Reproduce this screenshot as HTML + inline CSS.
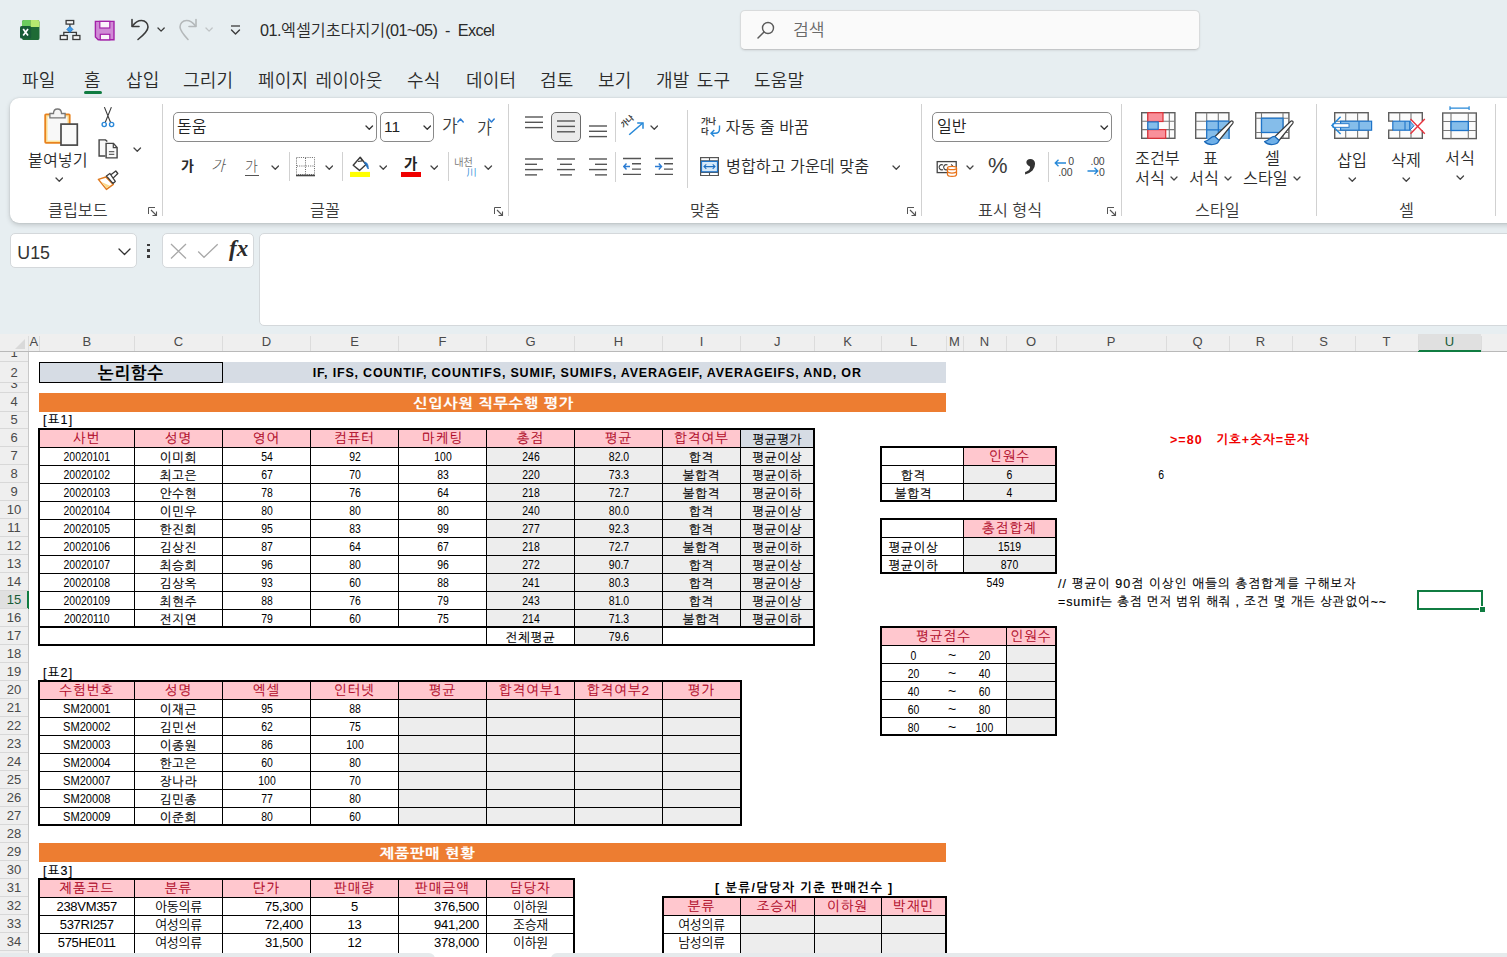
<!DOCTYPE html>
<html lang="ko"><head><meta charset="utf-8"><title>Excel</title>
<style>
html,body{margin:0;padding:0}
body{width:1507px;height:957px;overflow:hidden;background:#e7eef1;position:relative;font-family:"Liberation Sans","Noto Sans CJK KR",sans-serif;font-weight:350}
.a{position:absolute}
.t{position:absolute;white-space:nowrap;line-height:24px;height:24px}
.box{background:#fff;border:1px solid #8a8a8a;border-radius:5px;box-sizing:border-box}
.c{position:absolute;white-space:nowrap;font-size:12.5px;letter-spacing:0.7px;color:#000;font-family:"Liberation Sans","NanumGothic","Noto Sans CJK KR",sans-serif;overflow:visible}
.c{margin-top:0.5px;-webkit-text-stroke:0.15px currentColor}
.c.h{color:#b00a28;font-size:13.5px;letter-spacing:1px;margin-top:-0.5px;-webkit-text-stroke:0.1px currentColor}
.c.n{letter-spacing:0;font-size:12px;transform:scaleX(.87);margin-top:0;-webkit-text-stroke:0}
.c.m{font-family:"Liberation Sans","Noto Sans CJK KR",sans-serif;font-size:13px;letter-spacing:-0.3px;margin-top:0;-webkit-text-stroke:0}
.hd{position:absolute;text-align:center;font-size:13px;white-space:nowrap}
</style></head><body>
<svg class="a" style="left:19.5px;top:19.9px" width="20" height="20.2" viewBox="0 0 20 20.2">
<rect x="2" y="0" width="17.500" height="20.100" rx="2.200" fill="#1e6b35"/>
<path d="M2 7V2.200Q2 0 4.200 0H10.500V7Z" fill="#6ccb5f"/><path d="M10.500 0H17.300Q19.500 0 19.500 2.200V7H10.500Z" fill="#b5e86f"/>
<rect x="0" y="6" width="11.200" height="12.500" rx="1.600" fill="#185c37"/>
<path d="M3.200 9L8 15.500M8 9L3.200 15.500" stroke="#fff" stroke-width="1.700"/></svg>
<svg class="a" style="left:59px;top:19px" width="22" height="22" viewBox="0 0 22 22">
<rect x="7.100" y="1.500" width="7.600" height="3.600" fill="#f6f6f6" stroke="#3b3b3b" stroke-width="1.3"/>
<rect x="1.300" y="16.500" width="7" height="4" fill="#f6f6f6" stroke="#3b3b3b" stroke-width="1.3"/>
<rect x="13.900" y="16.500" width="7" height="4" fill="#f6f6f6" stroke="#3b3b3b" stroke-width="1.3"/>
<path d="M10.900 5.100V8M4.800 16.500V13.300H17.400V16.500M10.900 13V13.300" fill="none" stroke="#3b3b3b" stroke-width="1.3"/>
<path d="M10.900 7.400L13.900 10.400L10.900 13.400L7.900 10.400Z" fill="#3d9ae8" stroke="#1b6ec2" stroke-width="0.9"/></svg>
<svg class="a" style="left:94.4px;top:19.6px" width="22" height="22" viewBox="0 0 22 22">
<path d="M1.400 1.400H20V19.800H4.200L1.400 17Z" fill="#d08ad6" stroke="#a322a8" stroke-width="1.4"/>
<rect x="5.800" y="1.400" width="10" height="6.600" fill="#fbf3fb" stroke="#a322a8" stroke-width="1.2"/>
<rect x="6.300" y="14.300" width="9.500" height="5.500" fill="#fbf3fb" stroke="#a322a8" stroke-width="1.2"/></svg>
<svg class="a" style="left:129px;top:17px" width="22" height="24" viewBox="0 0 22 24"><path d="M3 2.5V9.5H10" fill="none" stroke="#3b3b3b" stroke-width="1.6" stroke-linecap="round" stroke-linejoin="round"/>
<path d="M3.5 9C6 5.5 9 3.5 12.5 3.5C16.5 3.5 19 6.5 19 10C19 13.5 16.5 16.5 9 22.5" fill="none" stroke="#3b3b3b" stroke-width="1.6" stroke-linecap="round"/></svg>
<svg class="a" style="left:156.9px;top:27.45px" width="8.2" height="5.1" viewBox="-1 -1 8.2 5.1"><path d="M0 0L3.1 3.1L6.2 0" fill="none" stroke="#3b3b3b" stroke-width="1.3" stroke-linecap="round" stroke-linejoin="round"/></svg>
<svg class="a" style="left:177px;top:17px" width="22" height="24" viewBox="0 0 22 24"><path d="M19 2.5V9.5H12" fill="none" stroke="#b4b8ba" stroke-width="1.6" stroke-linecap="round" stroke-linejoin="round"/>
<path d="M18.500 9C16 5.5 13 3.500 9.500 3.500C5.500 3.500 3 6.500 3 10C3 13.500 5.500 16.500 11 22.500" fill="none" stroke="#b4b8ba" stroke-width="1.6" stroke-linecap="round"/></svg>
<svg class="a" style="left:204.9px;top:27.45px" width="8.2" height="5.1" viewBox="-1 -1 8.2 5.1"><path d="M0 0L3.1 3.1L6.2 0" fill="none" stroke="#c0c4c6" stroke-width="1.3" stroke-linecap="round" stroke-linejoin="round"/></svg>
<svg class="a" style="left:230px;top:24px" width="11" height="12" viewBox="0 0 11 12"><path d="M1 2H10" stroke="#3b3b3b" stroke-width="1.3"/><path d="M1.5 6L5.5 10L9.5 6" fill="none" stroke="#3b3b3b" stroke-width="1.4" stroke-linejoin="round" stroke-linecap="round"/></svg>
<div class="t " style="left:260px;top:18px;font-size:16.2px;color:#2b2b2b;"><span style="letter-spacing:-0.5px">01.</span>엑셀기초다지기<span style="letter-spacing:-0.6px">(01~05)&nbsp; -&nbsp; Excel</span></div>
<div class="a" style="left:739.500px;top:9.800px;width:458px;height:38px;background:#fafafa;border:1px solid #d9dbdc;border-bottom-color:#c4c6c8;border-radius:5px;box-shadow:0 1px 2px rgba(0,0,0,.08)"></div>
<svg class="a" style="left:756px;top:20px" width="20" height="20" viewBox="0 0 20 20"><circle cx="12" cy="8" r="5.5" fill="none" stroke="#5a5a5a" stroke-width="1.4"/><path d="M8 12L2 18" stroke="#5a5a5a" stroke-width="1.5" stroke-linecap="round"/></svg>
<div class="t " style="left:793px;top:18px;font-size:17.2px;color:#6a6a6a;">검색</div>
<div class="t " style="left:22px;top:68.5px;font-size:18px;color:#2b2b2b;letter-spacing:0.2px;word-spacing:2px">파일</div>
<div class="t " style="left:84px;top:68.5px;font-size:18px;color:#2b2b2b;letter-spacing:0.2px;word-spacing:2px">홈</div>
<div class="t " style="left:126px;top:68.5px;font-size:18px;color:#2b2b2b;letter-spacing:0.2px;word-spacing:2px">삽입</div>
<div class="t " style="left:183px;top:68.5px;font-size:18px;color:#2b2b2b;letter-spacing:0.2px;word-spacing:2px">그리기</div>
<div class="t " style="left:258px;top:68.5px;font-size:18px;color:#2b2b2b;letter-spacing:0.2px;word-spacing:2px">페이지 레이아웃</div>
<div class="t " style="left:407px;top:68.5px;font-size:18px;color:#2b2b2b;letter-spacing:0.2px;word-spacing:2px">수식</div>
<div class="t " style="left:466px;top:68.5px;font-size:18px;color:#2b2b2b;letter-spacing:0.2px;word-spacing:2px">데이터</div>
<div class="t " style="left:540px;top:68.5px;font-size:18px;color:#2b2b2b;letter-spacing:0.2px;word-spacing:2px">검토</div>
<div class="t " style="left:598px;top:68.5px;font-size:18px;color:#2b2b2b;letter-spacing:0.2px;word-spacing:2px">보기</div>
<div class="t " style="left:656px;top:68.5px;font-size:18px;color:#2b2b2b;letter-spacing:0.2px;word-spacing:2px">개발 도구</div>
<div class="t " style="left:754px;top:68.5px;font-size:18px;color:#2b2b2b;letter-spacing:0.2px;word-spacing:2px">도움말</div>
<div class="a" style="left:84px;top:91px;width:18px;height:3px;border-radius:1.5px;background:#107c41"></div>
<div class="a" style="left:10px;top:97.5px;width:1520px;height:125px;background:#fff;border-radius:9px;box-shadow:0 2px 5px rgba(0,0,0,.17),0 0 2px rgba(0,0,0,.12)"></div>
<div class="a" style="left:162px;top:104px;width:1px;height:112px;background:#d1d1d1"></div>
<div class="a" style="left:508px;top:104px;width:1px;height:112px;background:#d1d1d1"></div>
<div class="a" style="left:921px;top:104px;width:1px;height:112px;background:#d1d1d1"></div>
<div class="a" style="left:1121px;top:104px;width:1px;height:112px;background:#d1d1d1"></div>
<div class="a" style="left:1316px;top:104px;width:1px;height:112px;background:#d1d1d1"></div>
<div class="a" style="left:1495px;top:104px;width:1px;height:112px;background:#d1d1d1"></div>
<div class="a" style="left:686.5px;top:110px;width:1px;height:78px;background:#d1d1d1"></div>
<div class="t " style="left:48px;top:197.5px;font-size:16.2px;color:#3b3b3b;">클립보드</div>
<svg class="a" style="left:148px;top:207px" width="10" height="10" viewBox="0 0 10 10"><path d="M0.5 7V0.5H7" fill="none" stroke="#555" stroke-width="1"/><path d="M3 3L8.5 8.5M8.5 4.5V8.5H4.5" fill="none" stroke="#555" stroke-width="1.1"/></svg>
<div class="t " style="left:310px;top:197.5px;font-size:16.2px;color:#3b3b3b;">글꼴</div>
<svg class="a" style="left:493.5px;top:207px" width="10" height="10" viewBox="0 0 10 10"><path d="M0.5 7V0.5H7" fill="none" stroke="#555" stroke-width="1"/><path d="M3 3L8.5 8.5M8.5 4.5V8.5H4.5" fill="none" stroke="#555" stroke-width="1.1"/></svg>
<div class="t " style="left:690px;top:197.5px;font-size:16.2px;color:#3b3b3b;">맞춤</div>
<svg class="a" style="left:906.5px;top:207px" width="10" height="10" viewBox="0 0 10 10"><path d="M0.5 7V0.5H7" fill="none" stroke="#555" stroke-width="1"/><path d="M3 3L8.5 8.5M8.5 4.5V8.5H4.5" fill="none" stroke="#555" stroke-width="1.1"/></svg>
<div class="t " style="left:978px;top:197.5px;font-size:16.2px;color:#3b3b3b;">표시 형식</div>
<svg class="a" style="left:1106.5px;top:207px" width="10" height="10" viewBox="0 0 10 10"><path d="M0.5 7V0.5H7" fill="none" stroke="#555" stroke-width="1"/><path d="M3 3L8.5 8.5M8.5 4.5V8.5H4.5" fill="none" stroke="#555" stroke-width="1.1"/></svg>
<div class="t " style="left:1195px;top:197.5px;font-size:16.2px;color:#3b3b3b;">스타일</div>
<div class="t " style="left:1399px;top:197.5px;font-size:16.2px;color:#3b3b3b;">셀</div>
<svg class="a" style="left:41px;top:106px" width="38" height="46" viewBox="0 0 38 46">
<rect x="4.200" y="8.300" width="24.500" height="28.500" rx="0.800" fill="#fde29a" stroke="#e8821e" stroke-width="1.8"/>
<rect x="6.600" y="10.600" width="19.800" height="24" fill="#f8f8f8"/>
<path d="M8.900 11.800V7.500H12.500C12.500 1.500 20.500 1.500 20.500 7.500H24.100V11.800Z" fill="#f5f5f5" stroke="#777" stroke-width="1.3"/>
<rect x="20" y="18.100" width="16.300" height="21" fill="#fafafa" stroke="#4a4a4a" stroke-width="1.7"/></svg>
<div class="t " style="left:28px;top:147.5px;font-size:16.2px;color:#2b2b2b;">붙여넣기</div>
<svg class="a" style="left:54.75px;top:176.875px" width="8.5" height="5.25" viewBox="-1 -1 8.5 5.25"><path d="M0 0L3.25 3.25L6.5 0" fill="none" stroke="#444" stroke-width="1.25" stroke-linecap="round" stroke-linejoin="round"/></svg>
<svg class="a" style="left:99px;top:106px" width="16" height="22" viewBox="0 0 16 22"><path d="M5.400 1.100L11.600 16.500M12.400 1.100L6.200 16.500" stroke="#3b3b3b" stroke-width="1.1" fill="none"/>
<circle cx="5.200" cy="18.500" r="2.100" fill="none" stroke="#2b88d8" stroke-width="1.4"/><circle cx="12.600" cy="18.500" r="2.100" fill="none" stroke="#2b88d8" stroke-width="1.4"/></svg>
<svg class="a" style="left:97px;top:138px" width="22" height="22" viewBox="0 0 22 22"><path d="M8.400 18H2.100V1.900H8.500L10.300 3.600" fill="#fafafa" stroke="#444" stroke-width="1.4"/>
<path d="M9.100 5.400H16.500L20.100 9.500V19.900H9.100Z" fill="#fafafa" stroke="#444" stroke-width="1.4"/><path d="M16.300 5.400V9.700H20.100" fill="none" stroke="#444" stroke-width="1.2"/><path d="M11.900 13.600H17.300M11.900 16.400H17.300" stroke="#666" stroke-width="1.1"/></svg>
<svg class="a" style="left:133.25px;top:147.075px" width="8.5" height="5.25" viewBox="-1 -1 8.5 5.25"><path d="M0 0L3.25 3.25L6.5 0" fill="none" stroke="#444" stroke-width="1.25" stroke-linecap="round" stroke-linejoin="round"/></svg>
<svg class="a" style="left:97px;top:170px" width="22" height="22" viewBox="0 0 22 22"><path d="M1.400 9.400L9.400 19.400L16.300 14.400L8.900 7Z" fill="#fff" stroke="#e07a1f" stroke-width="1.5" stroke-linejoin="round"/>
<path d="M4.500 12L9.600 18.200L13 15.800Z" fill="#fbd98a"/>
<path d="M12.900 5.500L18.800 1L20.800 3.500L15.800 8.400" fill="#fff" stroke="#3b3b3b" stroke-width="1.3" stroke-linejoin="round"/>
<path d="M9.400 6L12.900 3.500L18.300 11.400L15.900 13.400Z" fill="#fff" stroke="#3b3b3b" stroke-width="1.3" stroke-linejoin="round"/></svg>
<div class="a box" style="left:173px;top:112px;width:204px;height:29.5px"></div>
<div class="t " style="left:177px;top:114.5px;font-size:16px;color:#222;">돋움</div>
<svg class="a" style="left:365.25px;top:124.875px" width="8.5" height="5.25" viewBox="-1 -1 8.5 5.25"><path d="M0 0L3.25 3.25L6.5 0" fill="none" stroke="#333" stroke-width="1.3" stroke-linecap="round" stroke-linejoin="round"/></svg>
<div class="a box" style="left:380px;top:112px;width:54px;height:29.5px"></div>
<div class="t " style="left:384px;top:115px;font-size:15.5px;color:#222;">11</div>
<svg class="a" style="left:422.75px;top:124.875px" width="8.5" height="5.25" viewBox="-1 -1 8.5 5.25"><path d="M0 0L3.25 3.25L6.5 0" fill="none" stroke="#333" stroke-width="1.3" stroke-linecap="round" stroke-linejoin="round"/></svg>
<div class="t " style="left:442px;top:114.5px;font-size:17px;color:#3b3b3b;">가</div>
<svg class="a" style="left:457px;top:118px" width="7" height="5" viewBox="0 0 7 5"><path d="M0.8 4L3.500 1L6.200 4" fill="none" stroke="#2b7cd3" stroke-width="1.5" stroke-linecap="round" stroke-linejoin="round"/></svg>
<div class="t " style="left:477px;top:115.5px;font-size:16.2px;color:#3b3b3b;">가</div>
<svg class="a" style="left:488px;top:118px" width="7" height="5" viewBox="0 0 7 5"><path d="M0.8 1L3.500 4L6.200 1" fill="none" stroke="#2b7cd3" stroke-width="1.5" stroke-linecap="round" stroke-linejoin="round"/></svg>
<div class="t " style="left:181px;top:154px;font-size:14px;color:#2b2b2b;font-weight:700">가</div>
<div class="t " style="left:211px;top:154px;font-size:15px;color:#555;font-style:italic;font-weight:300">가</div>
<div class="t " style="left:245px;top:154px;font-size:14px;color:#555;font-weight:300">가</div>
<div class="a" style="left:245px;top:174.5px;width:14px;height:1px;background:#555"></div>
<svg class="a" style="left:270.75px;top:164.875px" width="8.5" height="5.25" viewBox="-1 -1 8.5 5.25"><path d="M0 0L3.25 3.25L6.5 0" fill="none" stroke="#444" stroke-width="1.25" stroke-linecap="round" stroke-linejoin="round"/></svg>
<div class="a" style="left:288.5px;top:152px;width:1px;height:29px;background:#d1d1d1"></div>
<svg class="a" style="left:296px;top:156.7px" width="20" height="20" viewBox="0 0 20 20"><rect x="0.5" y="0.5" width="18" height="17" fill="none" stroke="#666" stroke-width="1" stroke-dasharray="1 1.2"/>
<path d="M9.500 1V18M1 9H18" stroke="#666" stroke-width="1" stroke-dasharray="1 1.2"/><path d="M0 18.500H19" stroke="#444" stroke-width="1.6"/></svg>
<svg class="a" style="left:324.75px;top:164.875px" width="8.5" height="5.25" viewBox="-1 -1 8.5 5.25"><path d="M0 0L3.25 3.25L6.5 0" fill="none" stroke="#444" stroke-width="1.25" stroke-linecap="round" stroke-linejoin="round"/></svg>
<div class="a" style="left:341.5px;top:152px;width:1px;height:29px;background:#d1d1d1"></div>
<svg class="a" style="left:350px;top:154px" width="22" height="24" viewBox="0 0 22 24"><path d="M3.200 11.300L10.200 3.300L16 10.600L9.500 16.400Z" fill="#fff" stroke="#3b3b3b" stroke-width="1.4" stroke-linejoin="round"/><path d="M10.200 3.300L12.300 6.800L8 7.500" fill="none" stroke="#3b3b3b" stroke-width="1.2" stroke-linejoin="round"/>
<path d="M14.200 8.200C17 8 18.300 10.500 18.300 15C16.800 13.500 16.500 11.500 14.200 8.200Z" fill="#1e6fc0" stroke="#1e6fc0" stroke-width="0.8" stroke-linejoin="round"/>
<rect x="0" y="17.900" width="20" height="5.100" fill="#ffff00"/></svg>
<svg class="a" style="left:378.75px;top:164.875px" width="8.5" height="5.25" viewBox="-1 -1 8.5 5.25"><path d="M0 0L3.25 3.25L6.5 0" fill="none" stroke="#444" stroke-width="1.25" stroke-linecap="round" stroke-linejoin="round"/></svg>
<div class="t " style="left:404px;top:151.7px;font-size:14.5px;color:#222;font-weight:700">가</div>
<div class="a" style="left:401px;top:171.900px;width:20px;height:5.100px;background:#f00000"></div>
<svg class="a" style="left:429.75px;top:164.875px" width="8.5" height="5.25" viewBox="-1 -1 8.5 5.25"><path d="M0 0L3.25 3.25L6.5 0" fill="none" stroke="#444" stroke-width="1.25" stroke-linecap="round" stroke-linejoin="round"/></svg>
<div class="a" style="left:447.5px;top:152px;width:1px;height:29px;background:#d1d1d1"></div>
<div class="t " style="left:454px;top:149.5px;font-size:10.5px;color:#777;letter-spacing:-0.5px">내천</div>
<div class="t " style="left:466.5px;top:161px;font-size:10px;color:#2b88d8;">川</div>
<svg class="a" style="left:484.25px;top:164.875px" width="8.5" height="5.25" viewBox="-1 -1 8.5 5.25"><path d="M0 0L3.25 3.25L6.5 0" fill="none" stroke="#444" stroke-width="1.25" stroke-linecap="round" stroke-linejoin="round"/></svg>
<svg class="a" style="left:525px;top:116.3px" width="18" height="17.9" viewBox="0 0 18 17.9"><path d="M0 1.0H18" stroke="#555" stroke-width="1.4"/><path d="M0 6.3H18" stroke="#555" stroke-width="1.4"/><path d="M0 11.6H18" stroke="#555" stroke-width="1.4"/></svg>
<div class="a" style="left:551px;top:112px;width:27.5px;height:28px;background:#ebebeb;border:1px solid #6a6a6a;border-radius:5px"></div>
<svg class="a" style="left:557px;top:120px" width="18" height="18.200000000000003" viewBox="0 0 18 18.200000000000003"><path d="M0 1.0H18" stroke="#555" stroke-width="1.4"/><path d="M0 6.4H18" stroke="#555" stroke-width="1.4"/><path d="M0 11.8H18" stroke="#555" stroke-width="1.4"/></svg>
<svg class="a" style="left:589px;top:124.8px" width="18" height="17.9" viewBox="0 0 18 17.9"><path d="M0 1.0H18" stroke="#555" stroke-width="1.4"/><path d="M0 6.3H18" stroke="#555" stroke-width="1.4"/><path d="M0 11.6H18" stroke="#555" stroke-width="1.4"/></svg>
<div class="a" style="left:614.5px;top:112px;width:1px;height:30px;background:#d1d1d1"></div>
<svg class="a" style="left:621px;top:115px" width="24" height="24" viewBox="0 0 24 24"><path d="M8.200 19.700L21.500 8.300" stroke="#2688d8" stroke-width="1.5"/><path d="M16.200 7.900H22V13.700" fill="none" stroke="#2688d8" stroke-width="1.5"/>
<text x="0" y="0" font-size="8" font-weight="700" fill="#444" transform="translate(2.500 13.500) rotate(-42)" font-family="Noto Sans CJK KR,sans-serif">가나</text></svg>
<svg class="a" style="left:649.75px;top:124.875px" width="8.5" height="5.25" viewBox="-1 -1 8.5 5.25"><path d="M0 0L3.25 3.25L6.5 0" fill="none" stroke="#444" stroke-width="1.25" stroke-linecap="round" stroke-linejoin="round"/></svg>
<svg class="a" style="left:525px;top:158px" width="18" height="23.2" viewBox="0 0 18 23.2"><path d="M0 1.0H18" stroke="#555" stroke-width="1.4"/><path d="M0 6.3H12" stroke="#555" stroke-width="1.4"/><path d="M0 11.6H18" stroke="#555" stroke-width="1.4"/><path d="M0 16.9H12" stroke="#555" stroke-width="1.4"/></svg>
<svg class="a" style="left:557px;top:158px" width="18" height="23.2" viewBox="0 0 18 23.2"><path d="M0.0 1.0H18.0" stroke="#555" stroke-width="1.4"/><path d="M3.0 6.3H15.0" stroke="#555" stroke-width="1.4"/><path d="M0.0 11.6H18.0" stroke="#555" stroke-width="1.4"/><path d="M3.0 16.9H15.0" stroke="#555" stroke-width="1.4"/></svg>
<svg class="a" style="left:589px;top:158px" width="18" height="23.2" viewBox="0 0 18 23.2"><path d="M0 1.0H18" stroke="#555" stroke-width="1.4"/><path d="M6 6.3H18" stroke="#555" stroke-width="1.4"/><path d="M0 11.6H18" stroke="#555" stroke-width="1.4"/><path d="M6 16.9H18" stroke="#555" stroke-width="1.4"/></svg>
<div class="a" style="left:614.5px;top:152px;width:1px;height:30px;background:#d1d1d1"></div>
<svg class="a" style="left:623px;top:157px" width="20" height="20" viewBox="0 0 20 20"><path d="M0 1.500H18M9 6.800H18M9 12.100H18M0 17.400H18" stroke="#555" stroke-width="1.4"/><path d="M7 9.500H0.8M3.500 6.500L0.800 9.500L3.500 12.500" fill="none" stroke="#2b7cd3" stroke-width="1.4"/></svg>
<svg class="a" style="left:655px;top:157px" width="20" height="20" viewBox="0 0 20 20"><path d="M0 1.500H18M9 6.800H18M9 12.100H18M0 17.400H18" stroke="#555" stroke-width="1.4"/><path d="M0 9.500H6.500M3.800 6.500L6.500 9.500L3.800 12.500" fill="none" stroke="#2b7cd3" stroke-width="1.4"/></svg>
<div class="t " style="left:701px;top:109.4px;font-size:8.3px;color:#3b3b3b;letter-spacing:-0.3px;font-weight:700">가나</div>
<div class="t " style="left:701px;top:119.19999999999999px;font-size:8.3px;color:#3b3b3b;font-weight:700">다</div>
<svg class="a" style="left:708px;top:124px" width="16" height="14" viewBox="0 0 16 14"><path d="M11.500 1.500V5C11.500 8 10 9.300 7 9.300H3.300M6.300 6L3 9.300L6.300 12.600" fill="none" stroke="#2688d8" stroke-width="1.4"/></svg>
<div class="t " style="left:725.5px;top:114.5px;font-size:16.2px;color:#2b2b2b;">자동 줄 바꿈</div>
<svg class="a" style="left:700px;top:156.8px" width="19.5" height="19.5" viewBox="0 0 19.5 19.5"><rect x="0.600" y="0.600" width="17.800" height="18" fill="#fff" stroke="#555" stroke-width="1.2"/><path d="M0.600 3.800H18.400M0.600 15.400H18.400M9.500 0.600V3.800M9.500 15.400V18.600" stroke="#555" stroke-width="1.1"/>
<rect x="1.500" y="4.400" width="16" height="10.400" fill="#d6e9f9" stroke="#1e74c9" stroke-width="1.2"/><path d="M4 9.600H15M6.300 7.300L4 9.600L6.300 11.900M12.700 7.300L15 9.600L12.700 11.900" fill="none" stroke="#1e6fc0" stroke-width="1.1"/></svg>
<div class="t " style="left:726px;top:154px;font-size:16.2px;color:#2b2b2b;">병합하고 가운데 맞춤</div>
<svg class="a" style="left:891.75px;top:164.875px" width="8.5" height="5.25" viewBox="-1 -1 8.5 5.25"><path d="M0 0L3.25 3.25L6.5 0" fill="none" stroke="#444" stroke-width="1.25" stroke-linecap="round" stroke-linejoin="round"/></svg>
<div class="a box" style="left:932px;top:112px;width:180px;height:29.5px"></div>
<div class="t " style="left:937px;top:114.5px;font-size:16px;color:#222;">일반</div>
<svg class="a" style="left:1100.25px;top:124.875px" width="8.5" height="5.25" viewBox="-1 -1 8.5 5.25"><path d="M0 0L3.25 3.25L6.5 0" fill="none" stroke="#333" stroke-width="1.3" stroke-linecap="round" stroke-linejoin="round"/></svg>
<svg class="a" style="left:936px;top:157px" width="24" height="22" viewBox="0 0 24 22"><rect x="1.2" y="4.600" width="19" height="11" fill="#fff" stroke="#444" stroke-width="1.3"/><path d="M7 8A2.600 2.600 0 1 0 7 12.500M11.500 8A2.600 2.600 0 1 0 11.500 12.500M15 7.500A3 3 0 0 1 15 13" fill="none" stroke="#444" stroke-width="1.2"/>
<path d="M11.500 11V17.500C11.500 20 20.500 20 20.500 17.500V11" fill="#fff" stroke="#e8731a" stroke-width="1.3"/><ellipse cx="16" cy="11" rx="4.500" ry="1.700" fill="#fff" stroke="#e8731a" stroke-width="1.3"/><path d="M11.500 14.300C11.500 16.600 20.500 16.600 20.500 14.300" fill="none" stroke="#e8731a" stroke-width="1.2"/></svg>
<svg class="a" style="left:966.0px;top:165.0px" width="8" height="5.0" viewBox="-1 -1 8 5.0"><path d="M0 0L3.0 3.0L6 0" fill="none" stroke="#444" stroke-width="1.3" stroke-linecap="round" stroke-linejoin="round"/></svg>
<div class="t " style="left:988px;top:154px;font-size:22px;color:#3b3b3b;">%</div>
<div class="a" style="left:1022px;top:145.700px;font:bold 50px 'Liberation Serif',serif;line-height:normal;color:#333">’</div>
<div class="a" style="left:1047.5px;top:152px;width:1px;height:30px;background:#d1d1d1"></div>
<div class="t " style="left:1068.3px;top:149.3px;font-size:10.5px;color:#444;letter-spacing:-0.2px;font-weight:400">0</div>
<div class="t " style="left:1058.3px;top:159.5px;font-size:10.5px;color:#444;letter-spacing:-0.2px;font-weight:400">.00</div>
<svg class="a" style="left:1054px;top:158.5px" width="13" height="8" viewBox="0 0 13 8"><path d="M12 4H1.200M4.500 0.700L1.200 4L4.500 7.300" fill="none" stroke="#2688d8" stroke-width="1.3"/></svg>
<div class="t " style="left:1090.5px;top:149.3px;font-size:10.5px;color:#444;letter-spacing:-0.2px;font-weight:400">.00</div>
<div class="t " style="left:1096.3px;top:159.5px;font-size:10.5px;color:#444;letter-spacing:-0.2px;font-weight:400">.0</div>
<svg class="a" style="left:1086.5px;top:167.2px" width="12" height="8" viewBox="0 0 12 8"><path d="M0.500 4H10.800M7.500 0.700L10.800 4L7.500 7.300" fill="none" stroke="#2688d8" stroke-width="1.3"/></svg>
<svg class="a" style="left:1140.5px;top:112.3px" width="36" height="28" viewBox="0 0 36 28"><rect x="0.7" y="0.7" width="33.2" height="25.6" fill="#fbfbfb" stroke="#5e5e5e" stroke-width="1.4"/><path d="M6.8 0.7V26.3M28.3 0.7V26.3M0.7 9.2H33.9M0.7 17.6H33.9" stroke="#787878" stroke-width="1.1"/><rect x="6.8" y="0.700" width="15.200" height="8.800" fill="#f9909a" stroke="#dc2f36" stroke-width="1.2"/><rect x="6.8" y="17.600" width="17.900" height="8.700" fill="#f9909a" stroke="#dc2f36" stroke-width="1.2"/><rect x="6.8" y="9.900" width="10.400" height="7.400" fill="#85bdea" stroke="#1e74c9" stroke-width="1.2"/></svg>
<svg class="a" style="left:1194.5px;top:112.3px" width="42" height="36" viewBox="0 0 42 36"><rect x="0.7" y="0.7" width="33.2" height="25.6" fill="#fbfbfb" stroke="#5e5e5e" stroke-width="1.4"/><path d="M11.7 0.7V26.3M23.3 0.7V26.3M0.7 9.2H33.9M0.7 17.8H33.9" stroke="#787878" stroke-width="1.1"/><rect x="11.700" y="9.200" width="22.900" height="17.800" fill="#85bdea"/><path d="M11.700 27V9.200H34M23.300 9.200V27M11.700 17.800H34.600M34 9.200V27" fill="none" stroke="#1e74c9" stroke-width="1.2"/><path d="M19.5 25L35.500 9.500C37 8 39 9.700 37.800 11.300L24 28.500Z" fill="#fff" stroke="#3b3b3b" stroke-width="1.2" stroke-linejoin="round"/><path d="M19.800 24.500C15.500 24 15 28.500 9.500 29.500C13.500 34 23 33.500 24 28.200Z" fill="#6fb0e8" stroke="#1b69b8" stroke-width="1.2" stroke-linejoin="round"/></svg>
<svg class="a" style="left:1255.4px;top:112.3px" width="42" height="36" viewBox="0 0 42 36"><rect x="0.7" y="0.7" width="33.2" height="25.6" fill="#fbfbfb" stroke="#5e5e5e" stroke-width="1.4"/><path d="M6.5 0.7V26.3M28 0.7V26.3M0.7 6.2H33.9M0.7 20.5H33.9" stroke="#787878" stroke-width="1.1"/><rect x="6.500" y="6.200" width="21.500" height="14.300" fill="#85bdea" stroke="#1e74c9" stroke-width="1.3"/><path d="M19.5 25L35.500 9.500C37 8 39 9.700 37.800 11.300L24 28.500Z" fill="#fff" stroke="#3b3b3b" stroke-width="1.2" stroke-linejoin="round"/><path d="M19.800 24.500C15.500 24 15 28.500 9.500 29.500C13.500 34 23 33.500 24 28.200Z" fill="#6fb0e8" stroke="#1b69b8" stroke-width="1.2" stroke-linejoin="round"/></svg>
<div class="t " style="left:1135px;top:146px;font-size:16.2px;color:#2b2b2b;">조건부</div>
<div class="t " style="left:1135px;top:165.5px;font-size:16.2px;color:#2b2b2b;">서식</div>
<svg class="a" style="left:1170.0px;top:176.0px" width="8" height="5.0" viewBox="-1 -1 8 5.0"><path d="M0 0L3.0 3.0L6 0" fill="none" stroke="#444" stroke-width="1.3" stroke-linecap="round" stroke-linejoin="round"/></svg>
<div class="t " style="left:1203px;top:146px;font-size:16.2px;color:#2b2b2b;">표</div>
<div class="t " style="left:1189px;top:165.5px;font-size:16.2px;color:#2b2b2b;">서식</div>
<svg class="a" style="left:1224.0px;top:176.0px" width="8" height="5.0" viewBox="-1 -1 8 5.0"><path d="M0 0L3.0 3.0L6 0" fill="none" stroke="#444" stroke-width="1.3" stroke-linecap="round" stroke-linejoin="round"/></svg>
<div class="t " style="left:1265px;top:146px;font-size:16.2px;color:#2b2b2b;">셀</div>
<div class="t " style="left:1243px;top:165.5px;font-size:16.2px;color:#2b2b2b;">스타일</div>
<svg class="a" style="left:1293.0px;top:176.0px" width="8" height="5.0" viewBox="-1 -1 8 5.0"><path d="M0 0L3.0 3.0L6 0" fill="none" stroke="#444" stroke-width="1.3" stroke-linecap="round" stroke-linejoin="round"/></svg>
<svg class="a" style="left:1330.3px;top:112.3px" width="44" height="28" viewBox="0 0 44 28"><g transform="translate(4 0)"><rect x="0.7" y="0.7" width="33.5" height="25.6" fill="#fbfbfb" stroke="#5e5e5e" stroke-width="1.4"/><path d="M11.7 0.7V26.3M23.6 0.7V26.3M0.7 9.2H34.199999999999996M0.7 18.2H34.199999999999996" stroke="#787878" stroke-width="1.1"/><rect x="6.600" y="9.200" width="31" height="9" fill="#85bdea" stroke="#1e74c9" stroke-width="1.2"/><path d="M25 9.200V18.200" stroke="#1e74c9" stroke-width="1.1"/><rect x="-1" y="11.700" width="16" height="3.600" fill="#fff" stroke="#1e74c9" stroke-width="0.9"/><path d="M6.600 4.800L-2 13.500L6.600 22" fill="none" stroke="#2688d8" stroke-width="1.5"/></g></svg>
<svg class="a" style="left:1388.3px;top:112.3px" width="40" height="28" viewBox="0 0 40 28"><rect x="0.7" y="0.7" width="33.6" height="25.6" fill="#fbfbfb" stroke="#5e5e5e" stroke-width="1.4"/><path d="M11.7 0.7V26.3M23 0.7V26.3" stroke="#787878" stroke-width="1.1"/><rect x="-1" y="9.200" width="40" height="9" fill="#fff"/><rect x="4.800" y="9.200" width="17.100" height="9" fill="#85bdea" stroke="#1e74c9" stroke-width="1.2"/><path d="M21.900 9.200L26 13.700L21.900 18.200Z" fill="#85bdea" stroke="#1e74c9" stroke-width="1"/><path d="M17 9.200V18.200" stroke="#1e74c9" stroke-width="1.1"/><path d="M0 9.200H4.800M0 18.200H4.800" stroke="#5e5e5e" stroke-width="1.3"/><path d="M22.500 6.900L36.800 21.800M36.800 6.900L22.500 21.800" stroke="#e8343f" stroke-width="1.4"/></svg>
<svg class="a" style="left:1442.4px;top:105px" width="38" height="36" viewBox="0 0 38 36"><path d="M8 3.100H27.100M8 1.200V5M27.100 1.200V5" stroke="#2688d8" stroke-width="1.2"/><g transform="translate(0 7.300)"><rect x="0.7" y="0.7" width="33.6" height="25.6" fill="#fbfbfb" stroke="#5e5e5e" stroke-width="1.4"/><path d="M9 0.7V26.3M26.3 0.7V26.3M0.7 9.2H34.3M0.7 18.2H34.3" stroke="#787878" stroke-width="1.1"/><rect x="9" y="9.200" width="17.300" height="9" fill="#85bdea" stroke="#1e74c9" stroke-width="1.3"/></g></svg>
<div class="t " style="left:1337px;top:147.5px;font-size:16.2px;color:#2b2b2b;">삽입</div>
<svg class="a" style="left:1348.25px;top:177.375px" width="8.5" height="5.25" viewBox="-1 -1 8.5 5.25"><path d="M0 0L3.25 3.25L6.5 0" fill="none" stroke="#444" stroke-width="1.25" stroke-linecap="round" stroke-linejoin="round"/></svg>
<div class="t " style="left:1391px;top:147.5px;font-size:16.2px;color:#2b2b2b;">삭제</div>
<svg class="a" style="left:1402.25px;top:177.375px" width="8.5" height="5.25" viewBox="-1 -1 8.5 5.25"><path d="M0 0L3.25 3.25L6.5 0" fill="none" stroke="#444" stroke-width="1.25" stroke-linecap="round" stroke-linejoin="round"/></svg>
<div class="t " style="left:1445px;top:145.5px;font-size:16.2px;color:#2b2b2b;">서식</div>
<svg class="a" style="left:1456.25px;top:175.375px" width="8.5" height="5.25" viewBox="-1 -1 8.5 5.25"><path d="M0 0L3.25 3.25L6.5 0" fill="none" stroke="#444" stroke-width="1.25" stroke-linecap="round" stroke-linejoin="round"/></svg>
<div class="a" style="left:10.400px;top:233.400px;width:125px;height:33px;background:#fff;border:1px solid #d4d8db;border-radius:5px"></div>
<div class="t " style="left:17.3px;top:240.6px;font-size:17.8px;color:#333;font-weight:400">U15</div>
<svg class="a" style="left:117.9px;top:248.35px" width="13" height="7.5" viewBox="-1 -1 13 7.5"><path d="M0 0L5.5 5.5L11 0" fill="none" stroke="#333" stroke-width="1.3" stroke-linecap="round" stroke-linejoin="round"/></svg>
<div class="a" style="left:147.300px;top:243.5px;width:2.8px;height:2.8px;background:#3b3b3b"></div>
<div class="a" style="left:147.300px;top:249.29999999999998px;width:2.8px;height:2.8px;background:#3b3b3b"></div>
<div class="a" style="left:147.300px;top:255.1px;width:2.8px;height:2.8px;background:#3b3b3b"></div>
<div class="a" style="left:162.400px;top:233.400px;width:89.500px;height:33px;background:#fff;border:1px solid #d4d8db;border-radius:5px"></div>
<svg class="a" style="left:169.5px;top:242.5px" width="17" height="17" viewBox="0 0 17 17"><path d="M1 1L16 15.500M16 1L1 15.500" stroke="#a8a8a8" stroke-width="1.3"/></svg>
<svg class="a" style="left:197px;top:242.5px" width="22" height="16" viewBox="0 0 22 16"><path d="M1.200 8.500L7 14.300L20.700 1.300" fill="none" stroke="#a8a8a8" stroke-width="1.3"/></svg>
<div class="t " style="left:229px;top:236.7px;font-size:23px;color:#2b2b2b;font-family:Liberation Serif,serif;font-style:italic;font-weight:700;letter-spacing:0px;line-height:24px">fx</div>
<div class="a" style="left:259.400px;top:233.400px;width:1260px;height:90.500px;background:#fff;border:1px solid #d4d8db;border-radius:5px"></div>
<div class="a" style="left:0;top:334px;width:1507px;height:623px;background:#fff"></div>
<div class="a" style="left:39px;top:362px;width:907px;height:20.5px;background:#d6dce4"></div>
<div class="a" style="left:39px;top:362px;width:181.5px;height:18.7px;border:1px solid #000"></div>
<div class="c " style="left:39px;width:183.5px;text-align:center;top:362px;height:21px;line-height:23px;font-size:17px;font-weight:700;-webkit-text-stroke:0;letter-spacing:0.5px;margin-top:0">논리함수</div>
<div class="c " style="left:222.5px;width:723.5px;text-align:center;top:362px;height:21px;line-height:23px;font-size:12.5px;font-weight:700;-webkit-text-stroke:0;letter-spacing:0.81px;font-family:Liberation Sans,sans-serif;margin-top:0;margin-left:3px">IF, IFS, COUNTIF, COUNTIFS, SUMIF, SUMIFS, AVERAGEIF, AVERAGEIFS, AND, OR</div>
<div class="a" style="left:39px;top:393px;width:907px;height:19px;background:#ed7d31"></div>
<div class="c " style="left:39px;width:907px;text-align:center;top:393px;height:18.5px;line-height:20.5px;color:#fff;font-weight:700;-webkit-text-stroke:0.15px #fff;font-size:13.5px;letter-spacing:0.6px;margin-top:0.5px;margin-left:1px;transform:scaleX(1.135)">신입사원 직무수행 평가</div>
<div class="a" style="left:39px;top:843px;width:907px;height:18.600000000000023px;background:#ed7d31"></div>
<div class="c " style="left:39px;width:775px;text-align:center;top:843px;height:18px;line-height:20px;color:#fff;font-weight:700;-webkit-text-stroke:0.15px #fff;font-size:13.5px;letter-spacing:0.6px;margin-top:0.5px;margin-left:1px;transform:scaleX(1.135)">제품판매 현황</div>
<div class="c " style="left:43px;text-align:left;top:411.5px;height:17.5px;line-height:19.5px;letter-spacing:1.2px;margin-top:-0.5px">[표1]</div>
<div class="c " style="left:43px;text-align:left;top:663px;height:18px;line-height:20px;letter-spacing:1.2px;margin-top:-0.5px">[표2]</div>
<div class="c " style="left:43px;text-align:left;top:861px;height:18px;line-height:20px;letter-spacing:1.2px;margin-top:-0.5px">[표3]</div>
<div class="a" style="left:39px;top:429px;width:701.5px;height:18px;background:#ffc7ce"></div>
<div class="a" style="left:740.5px;top:429px;width:73.5px;height:18px;background:#d6dce4"></div>
<div class="a" style="left:486.5px;top:447px;width:327.5px;height:180px;background:#ededed"></div>
<div class="a" style="left:574.5px;top:627px;width:88.0px;height:18px;background:#ededed"></div>
<div class="c h" style="left:39px;width:95.5px;text-align:center;top:429px;height:18px;line-height:20px;">사번</div>
<div class="c h" style="left:134.5px;width:88.0px;text-align:center;top:429px;height:18px;line-height:20px;">성명</div>
<div class="c h" style="left:222.5px;width:88.0px;text-align:center;top:429px;height:18px;line-height:20px;">영어</div>
<div class="c h" style="left:310.5px;width:88.0px;text-align:center;top:429px;height:18px;line-height:20px;">컴퓨터</div>
<div class="c h" style="left:398.5px;width:88.0px;text-align:center;top:429px;height:18px;line-height:20px;">마케팅</div>
<div class="c h" style="left:486.5px;width:88.0px;text-align:center;top:429px;height:18px;line-height:20px;">총점</div>
<div class="c h" style="left:574.5px;width:88.0px;text-align:center;top:429px;height:18px;line-height:20px;">평균</div>
<div class="c h" style="left:662.5px;width:78.0px;text-align:center;top:429px;height:18px;line-height:20px;">합격여부</div>
<div class="c " style="left:740.5px;width:73.5px;text-align:center;top:429px;height:18px;line-height:20px;letter-spacing:0.6px">평균평가</div>
<div class="c  n" style="left:39px;width:95.5px;text-align:center;top:447px;height:18px;line-height:20px;">20020101</div>
<div class="c " style="left:134.5px;width:88.0px;text-align:center;top:447px;height:18px;line-height:20px;">이미희</div>
<div class="c  n" style="left:222.5px;width:88.0px;text-align:center;top:447px;height:18px;line-height:20px;">54</div>
<div class="c  n" style="left:310.5px;width:88.0px;text-align:center;top:447px;height:18px;line-height:20px;">92</div>
<div class="c  n" style="left:398.5px;width:88.0px;text-align:center;top:447px;height:18px;line-height:20px;">100</div>
<div class="c  n" style="left:486.5px;width:88.0px;text-align:center;top:447px;height:18px;line-height:20px;">246</div>
<div class="c  n" style="left:574.5px;width:88.0px;text-align:center;top:447px;height:18px;line-height:20px;">82.0</div>
<div class="c " style="left:662.5px;width:78.0px;text-align:center;top:447px;height:18px;line-height:20px;">합격</div>
<div class="c " style="left:740.5px;width:73.5px;text-align:center;top:447px;height:18px;line-height:20px;">평균이상</div>
<div class="c  n" style="left:39px;width:95.5px;text-align:center;top:465px;height:18px;line-height:20px;">20020102</div>
<div class="c " style="left:134.5px;width:88.0px;text-align:center;top:465px;height:18px;line-height:20px;">최고은</div>
<div class="c  n" style="left:222.5px;width:88.0px;text-align:center;top:465px;height:18px;line-height:20px;">67</div>
<div class="c  n" style="left:310.5px;width:88.0px;text-align:center;top:465px;height:18px;line-height:20px;">70</div>
<div class="c  n" style="left:398.5px;width:88.0px;text-align:center;top:465px;height:18px;line-height:20px;">83</div>
<div class="c  n" style="left:486.5px;width:88.0px;text-align:center;top:465px;height:18px;line-height:20px;">220</div>
<div class="c  n" style="left:574.5px;width:88.0px;text-align:center;top:465px;height:18px;line-height:20px;">73.3</div>
<div class="c " style="left:662.5px;width:78.0px;text-align:center;top:465px;height:18px;line-height:20px;">불합격</div>
<div class="c " style="left:740.5px;width:73.5px;text-align:center;top:465px;height:18px;line-height:20px;">평균이하</div>
<div class="c  n" style="left:39px;width:95.5px;text-align:center;top:483px;height:18px;line-height:20px;">20020103</div>
<div class="c " style="left:134.5px;width:88.0px;text-align:center;top:483px;height:18px;line-height:20px;">안수현</div>
<div class="c  n" style="left:222.5px;width:88.0px;text-align:center;top:483px;height:18px;line-height:20px;">78</div>
<div class="c  n" style="left:310.5px;width:88.0px;text-align:center;top:483px;height:18px;line-height:20px;">76</div>
<div class="c  n" style="left:398.5px;width:88.0px;text-align:center;top:483px;height:18px;line-height:20px;">64</div>
<div class="c  n" style="left:486.5px;width:88.0px;text-align:center;top:483px;height:18px;line-height:20px;">218</div>
<div class="c  n" style="left:574.5px;width:88.0px;text-align:center;top:483px;height:18px;line-height:20px;">72.7</div>
<div class="c " style="left:662.5px;width:78.0px;text-align:center;top:483px;height:18px;line-height:20px;">불합격</div>
<div class="c " style="left:740.5px;width:73.5px;text-align:center;top:483px;height:18px;line-height:20px;">평균이하</div>
<div class="c  n" style="left:39px;width:95.5px;text-align:center;top:501px;height:18px;line-height:20px;">20020104</div>
<div class="c " style="left:134.5px;width:88.0px;text-align:center;top:501px;height:18px;line-height:20px;">이민우</div>
<div class="c  n" style="left:222.5px;width:88.0px;text-align:center;top:501px;height:18px;line-height:20px;">80</div>
<div class="c  n" style="left:310.5px;width:88.0px;text-align:center;top:501px;height:18px;line-height:20px;">80</div>
<div class="c  n" style="left:398.5px;width:88.0px;text-align:center;top:501px;height:18px;line-height:20px;">80</div>
<div class="c  n" style="left:486.5px;width:88.0px;text-align:center;top:501px;height:18px;line-height:20px;">240</div>
<div class="c  n" style="left:574.5px;width:88.0px;text-align:center;top:501px;height:18px;line-height:20px;">80.0</div>
<div class="c " style="left:662.5px;width:78.0px;text-align:center;top:501px;height:18px;line-height:20px;">합격</div>
<div class="c " style="left:740.5px;width:73.5px;text-align:center;top:501px;height:18px;line-height:20px;">평균이상</div>
<div class="c  n" style="left:39px;width:95.5px;text-align:center;top:519px;height:18px;line-height:20px;">20020105</div>
<div class="c " style="left:134.5px;width:88.0px;text-align:center;top:519px;height:18px;line-height:20px;">한진희</div>
<div class="c  n" style="left:222.5px;width:88.0px;text-align:center;top:519px;height:18px;line-height:20px;">95</div>
<div class="c  n" style="left:310.5px;width:88.0px;text-align:center;top:519px;height:18px;line-height:20px;">83</div>
<div class="c  n" style="left:398.5px;width:88.0px;text-align:center;top:519px;height:18px;line-height:20px;">99</div>
<div class="c  n" style="left:486.5px;width:88.0px;text-align:center;top:519px;height:18px;line-height:20px;">277</div>
<div class="c  n" style="left:574.5px;width:88.0px;text-align:center;top:519px;height:18px;line-height:20px;">92.3</div>
<div class="c " style="left:662.5px;width:78.0px;text-align:center;top:519px;height:18px;line-height:20px;">합격</div>
<div class="c " style="left:740.5px;width:73.5px;text-align:center;top:519px;height:18px;line-height:20px;">평균이상</div>
<div class="c  n" style="left:39px;width:95.5px;text-align:center;top:537px;height:18px;line-height:20px;">20020106</div>
<div class="c " style="left:134.5px;width:88.0px;text-align:center;top:537px;height:18px;line-height:20px;">김상진</div>
<div class="c  n" style="left:222.5px;width:88.0px;text-align:center;top:537px;height:18px;line-height:20px;">87</div>
<div class="c  n" style="left:310.5px;width:88.0px;text-align:center;top:537px;height:18px;line-height:20px;">64</div>
<div class="c  n" style="left:398.5px;width:88.0px;text-align:center;top:537px;height:18px;line-height:20px;">67</div>
<div class="c  n" style="left:486.5px;width:88.0px;text-align:center;top:537px;height:18px;line-height:20px;">218</div>
<div class="c  n" style="left:574.5px;width:88.0px;text-align:center;top:537px;height:18px;line-height:20px;">72.7</div>
<div class="c " style="left:662.5px;width:78.0px;text-align:center;top:537px;height:18px;line-height:20px;">불합격</div>
<div class="c " style="left:740.5px;width:73.5px;text-align:center;top:537px;height:18px;line-height:20px;">평균이하</div>
<div class="c  n" style="left:39px;width:95.5px;text-align:center;top:555px;height:18px;line-height:20px;">20020107</div>
<div class="c " style="left:134.5px;width:88.0px;text-align:center;top:555px;height:18px;line-height:20px;">최승희</div>
<div class="c  n" style="left:222.5px;width:88.0px;text-align:center;top:555px;height:18px;line-height:20px;">96</div>
<div class="c  n" style="left:310.5px;width:88.0px;text-align:center;top:555px;height:18px;line-height:20px;">80</div>
<div class="c  n" style="left:398.5px;width:88.0px;text-align:center;top:555px;height:18px;line-height:20px;">96</div>
<div class="c  n" style="left:486.5px;width:88.0px;text-align:center;top:555px;height:18px;line-height:20px;">272</div>
<div class="c  n" style="left:574.5px;width:88.0px;text-align:center;top:555px;height:18px;line-height:20px;">90.7</div>
<div class="c " style="left:662.5px;width:78.0px;text-align:center;top:555px;height:18px;line-height:20px;">합격</div>
<div class="c " style="left:740.5px;width:73.5px;text-align:center;top:555px;height:18px;line-height:20px;">평균이상</div>
<div class="c  n" style="left:39px;width:95.5px;text-align:center;top:573px;height:18px;line-height:20px;">20020108</div>
<div class="c " style="left:134.5px;width:88.0px;text-align:center;top:573px;height:18px;line-height:20px;">김상옥</div>
<div class="c  n" style="left:222.5px;width:88.0px;text-align:center;top:573px;height:18px;line-height:20px;">93</div>
<div class="c  n" style="left:310.5px;width:88.0px;text-align:center;top:573px;height:18px;line-height:20px;">60</div>
<div class="c  n" style="left:398.5px;width:88.0px;text-align:center;top:573px;height:18px;line-height:20px;">88</div>
<div class="c  n" style="left:486.5px;width:88.0px;text-align:center;top:573px;height:18px;line-height:20px;">241</div>
<div class="c  n" style="left:574.5px;width:88.0px;text-align:center;top:573px;height:18px;line-height:20px;">80.3</div>
<div class="c " style="left:662.5px;width:78.0px;text-align:center;top:573px;height:18px;line-height:20px;">합격</div>
<div class="c " style="left:740.5px;width:73.5px;text-align:center;top:573px;height:18px;line-height:20px;">평균이상</div>
<div class="c  n" style="left:39px;width:95.5px;text-align:center;top:591px;height:18px;line-height:20px;">20020109</div>
<div class="c " style="left:134.5px;width:88.0px;text-align:center;top:591px;height:18px;line-height:20px;">최현주</div>
<div class="c  n" style="left:222.5px;width:88.0px;text-align:center;top:591px;height:18px;line-height:20px;">88</div>
<div class="c  n" style="left:310.5px;width:88.0px;text-align:center;top:591px;height:18px;line-height:20px;">76</div>
<div class="c  n" style="left:398.5px;width:88.0px;text-align:center;top:591px;height:18px;line-height:20px;">79</div>
<div class="c  n" style="left:486.5px;width:88.0px;text-align:center;top:591px;height:18px;line-height:20px;">243</div>
<div class="c  n" style="left:574.5px;width:88.0px;text-align:center;top:591px;height:18px;line-height:20px;">81.0</div>
<div class="c " style="left:662.5px;width:78.0px;text-align:center;top:591px;height:18px;line-height:20px;">합격</div>
<div class="c " style="left:740.5px;width:73.5px;text-align:center;top:591px;height:18px;line-height:20px;">평균이상</div>
<div class="c  n" style="left:39px;width:95.5px;text-align:center;top:609px;height:18px;line-height:20px;">20020110</div>
<div class="c " style="left:134.5px;width:88.0px;text-align:center;top:609px;height:18px;line-height:20px;">전지연</div>
<div class="c  n" style="left:222.5px;width:88.0px;text-align:center;top:609px;height:18px;line-height:20px;">79</div>
<div class="c  n" style="left:310.5px;width:88.0px;text-align:center;top:609px;height:18px;line-height:20px;">60</div>
<div class="c  n" style="left:398.5px;width:88.0px;text-align:center;top:609px;height:18px;line-height:20px;">75</div>
<div class="c  n" style="left:486.5px;width:88.0px;text-align:center;top:609px;height:18px;line-height:20px;">214</div>
<div class="c  n" style="left:574.5px;width:88.0px;text-align:center;top:609px;height:18px;line-height:20px;">71.3</div>
<div class="c " style="left:662.5px;width:78.0px;text-align:center;top:609px;height:18px;line-height:20px;">불합격</div>
<div class="c " style="left:740.5px;width:73.5px;text-align:center;top:609px;height:18px;line-height:20px;">평균이하</div>
<div class="c " style="left:486.5px;width:88.0px;text-align:center;top:627px;height:18px;line-height:20px;">전체평균</div>
<div class="c  n" style="left:574.5px;width:88.0px;text-align:center;top:627px;height:18px;line-height:20px;">79.6</div>
<div class="a" style="left:134.0px;top:429px;width:1px;height:198px;background:#000"></div>
<div class="a" style="left:222.0px;top:429px;width:1px;height:198px;background:#000"></div>
<div class="a" style="left:310.0px;top:429px;width:1px;height:198px;background:#000"></div>
<div class="a" style="left:398.0px;top:429px;width:1px;height:198px;background:#000"></div>
<div class="a" style="left:486.0px;top:429px;width:1px;height:198px;background:#000"></div>
<div class="a" style="left:574.0px;top:429px;width:1px;height:198px;background:#000"></div>
<div class="a" style="left:662.0px;top:429px;width:1px;height:198px;background:#000"></div>
<div class="a" style="left:740.0px;top:429px;width:1px;height:198px;background:#000"></div>
<div class="a" style="left:486.0px;top:627px;width:1px;height:18px;background:#000"></div>
<div class="a" style="left:574.0px;top:627px;width:1px;height:18px;background:#000"></div>
<div class="a" style="left:662.0px;top:627px;width:1px;height:18px;background:#000"></div>
<div class="a" style="left:39px;top:446.5px;width:775px;height:1px;background:#000"></div>
<div class="a" style="left:39px;top:464.5px;width:775px;height:1px;background:#000"></div>
<div class="a" style="left:39px;top:482.5px;width:775px;height:1px;background:#000"></div>
<div class="a" style="left:39px;top:500.5px;width:775px;height:1px;background:#000"></div>
<div class="a" style="left:39px;top:518.5px;width:775px;height:1px;background:#000"></div>
<div class="a" style="left:39px;top:536.5px;width:775px;height:1px;background:#000"></div>
<div class="a" style="left:39px;top:554.5px;width:775px;height:1px;background:#000"></div>
<div class="a" style="left:39px;top:572.5px;width:775px;height:1px;background:#000"></div>
<div class="a" style="left:39px;top:590.5px;width:775px;height:1px;background:#000"></div>
<div class="a" style="left:39px;top:608.5px;width:775px;height:1px;background:#000"></div>
<div class="a" style="left:39px;top:626.0px;width:775px;height:2px;background:#000"></div>
<div class="a" style="left:38px;top:428.0px;width:777px;height:2px;background:#000"></div>
<div class="a" style="left:38px;top:644.0px;width:777px;height:2px;background:#000"></div>
<div class="a" style="left:38.0px;top:429px;width:2px;height:216px;background:#000"></div>
<div class="a" style="left:813.0px;top:429px;width:2px;height:216px;background:#000"></div>
<div class="a" style="left:963px;top:447px;width:93px;height:18px;background:#ffc7ce"></div>
<div class="a" style="left:963px;top:465px;width:93px;height:36px;background:#ededed"></div>
<div class="c h" style="left:963px;width:93px;text-align:center;top:447px;height:18px;line-height:20px;">인원수</div>
<div class="c " style="left:881px;width:65px;text-align:center;top:465px;height:18px;line-height:20px;">합격</div>
<div class="c " style="left:881px;width:65px;text-align:center;top:483px;height:18px;line-height:20px;">불합격</div>
<div class="c  n" style="left:963px;width:93px;text-align:center;top:465px;height:18px;line-height:20px;">6</div>
<div class="c  n" style="left:963px;width:93px;text-align:center;top:483px;height:18px;line-height:20px;">4</div>
<div class="a" style="left:962.5px;top:447px;width:1px;height:54px;background:#000"></div>
<div class="a" style="left:881px;top:464.5px;width:175px;height:1px;background:#000"></div>
<div class="a" style="left:881px;top:482.5px;width:175px;height:1px;background:#000"></div>
<div class="a" style="left:880px;top:446.0px;width:177px;height:2px;background:#000"></div>
<div class="a" style="left:880px;top:500.0px;width:177px;height:2px;background:#000"></div>
<div class="a" style="left:880.0px;top:447px;width:2px;height:54px;background:#000"></div>
<div class="a" style="left:1055.0px;top:447px;width:2px;height:54px;background:#000"></div>
<div class="a" style="left:963px;top:519px;width:93px;height:18px;background:#ffc7ce"></div>
<div class="a" style="left:963px;top:537px;width:93px;height:36px;background:#ededed"></div>
<div class="c h" style="left:963px;width:93px;text-align:center;top:519px;height:18px;line-height:20px;">총점합계</div>
<div class="c " style="left:881px;width:65px;text-align:center;top:537px;height:18px;line-height:20px;">평균이상</div>
<div class="c " style="left:881px;width:65px;text-align:center;top:555px;height:18px;line-height:20px;">평균이하</div>
<div class="c  n" style="left:963px;width:93px;text-align:center;top:537px;height:18px;line-height:20px;">1519</div>
<div class="c  n" style="left:963px;width:93px;text-align:center;top:555px;height:18px;line-height:20px;">870</div>
<div class="a" style="left:962.5px;top:519px;width:1px;height:54px;background:#000"></div>
<div class="a" style="left:881px;top:536.5px;width:175px;height:1px;background:#000"></div>
<div class="a" style="left:881px;top:554.5px;width:175px;height:1px;background:#000"></div>
<div class="a" style="left:880px;top:518.0px;width:177px;height:2px;background:#000"></div>
<div class="a" style="left:880px;top:572.0px;width:177px;height:2px;background:#000"></div>
<div class="a" style="left:880.0px;top:519px;width:2px;height:54px;background:#000"></div>
<div class="a" style="left:1055.0px;top:519px;width:2px;height:54px;background:#000"></div>
<div class="c  n" style="left:963px;width:41px;text-align:right;top:573px;height:18px;line-height:20px;transform-origin:100% 50%;">549</div>
<div class="c  n" style="left:1056px;width:108px;text-align:right;top:465px;height:18px;line-height:20px;transform-origin:100% 50%;">6</div>
<div class="c " style="left:1170px;text-align:left;top:429px;height:18px;line-height:20px;color:#f00000;font-weight:700;-webkit-text-stroke:0;letter-spacing:1.05px">&gt;=80&nbsp;&nbsp; 기호+숫자=문자</div>
<div class="c " style="left:1058px;text-align:left;top:573px;height:18px;line-height:20px;letter-spacing:1.15px">// 평균이 90점 이상인 애들의 총점합계를 구해보자</div>
<div class="c " style="left:1058px;text-align:left;top:591px;height:18px;line-height:20px;letter-spacing:0.86px">=sumif는 총점 먼저 범위 해줘 , 조건 몇 개든 상관없어~~</div>
<div class="a" style="left:881px;top:627px;width:175px;height:18px;background:#ffc7ce"></div>
<div class="a" style="left:1006px;top:645px;width:50px;height:90px;background:#ededed"></div>
<div class="c h" style="left:881px;width:125px;text-align:center;top:627px;height:18px;line-height:20px;">평균점수</div>
<div class="c h" style="left:1006px;width:50px;text-align:center;top:627px;height:18px;line-height:20px;">인원수</div>
<div class="c  n" style="left:881px;width:65px;text-align:center;top:645px;height:18px;line-height:20px;margin-top:0.7px;">0</div>
<div class="c  n" style="left:946px;width:17px;text-align:center;top:645px;height:18px;line-height:20px;font-size:14px;transform:none;margin-left:-2.500px;margin-top:0">~</div>
<div class="c  n" style="left:963px;width:43px;text-align:center;top:645px;height:18px;line-height:20px;margin-top:0.7px;">20</div>
<div class="c  n" style="left:881px;width:65px;text-align:center;top:663px;height:18px;line-height:20px;margin-top:0.7px;">20</div>
<div class="c  n" style="left:946px;width:17px;text-align:center;top:663px;height:18px;line-height:20px;font-size:14px;transform:none;margin-left:-2.500px;margin-top:0">~</div>
<div class="c  n" style="left:963px;width:43px;text-align:center;top:663px;height:18px;line-height:20px;margin-top:0.7px;">40</div>
<div class="c  n" style="left:881px;width:65px;text-align:center;top:681px;height:18px;line-height:20px;margin-top:0.7px;">40</div>
<div class="c  n" style="left:946px;width:17px;text-align:center;top:681px;height:18px;line-height:20px;font-size:14px;transform:none;margin-left:-2.500px;margin-top:0">~</div>
<div class="c  n" style="left:963px;width:43px;text-align:center;top:681px;height:18px;line-height:20px;margin-top:0.7px;">60</div>
<div class="c  n" style="left:881px;width:65px;text-align:center;top:699px;height:18px;line-height:20px;margin-top:0.7px;">60</div>
<div class="c  n" style="left:946px;width:17px;text-align:center;top:699px;height:18px;line-height:20px;font-size:14px;transform:none;margin-left:-2.500px;margin-top:0">~</div>
<div class="c  n" style="left:963px;width:43px;text-align:center;top:699px;height:18px;line-height:20px;margin-top:0.7px;">80</div>
<div class="c  n" style="left:881px;width:65px;text-align:center;top:717px;height:18px;line-height:20px;margin-top:0.7px;">80</div>
<div class="c  n" style="left:946px;width:17px;text-align:center;top:717px;height:18px;line-height:20px;font-size:14px;transform:none;margin-left:-2.500px;margin-top:0">~</div>
<div class="c  n" style="left:963px;width:43px;text-align:center;top:717px;height:18px;line-height:20px;margin-top:0.7px;">100</div>
<div class="a" style="left:1005.5px;top:627px;width:1px;height:108px;background:#000"></div>
<div class="a" style="left:881px;top:644.5px;width:175px;height:1px;background:#000"></div>
<div class="a" style="left:881px;top:662.5px;width:175px;height:1px;background:#000"></div>
<div class="a" style="left:881px;top:680.5px;width:175px;height:1px;background:#000"></div>
<div class="a" style="left:881px;top:698.5px;width:175px;height:1px;background:#000"></div>
<div class="a" style="left:881px;top:716.5px;width:175px;height:1px;background:#000"></div>
<div class="a" style="left:880px;top:626.0px;width:177px;height:2px;background:#000"></div>
<div class="a" style="left:880px;top:734.0px;width:177px;height:2px;background:#000"></div>
<div class="a" style="left:880.0px;top:627px;width:2px;height:108px;background:#000"></div>
<div class="a" style="left:1055.0px;top:627px;width:2px;height:108px;background:#000"></div>
<div class="a" style="left:1417px;top:590px;width:62px;height:16px;border:2px solid #107c41"></div>
<div class="a" style="left:1478.5px;top:605.5px;width:5px;height:5px;background:#107c41;border:1px solid #fff"></div>
<div class="a" style="left:39px;top:681px;width:701.5px;height:18px;background:#ffc7ce"></div>
<div class="a" style="left:398.5px;top:699px;width:342.0px;height:126px;background:#ededed"></div>
<div class="c h" style="left:39px;width:95.5px;text-align:center;top:681px;height:18px;line-height:20px;">수험번호</div>
<div class="c h" style="left:134.5px;width:88.0px;text-align:center;top:681px;height:18px;line-height:20px;">성명</div>
<div class="c h" style="left:222.5px;width:88.0px;text-align:center;top:681px;height:18px;line-height:20px;">엑셀</div>
<div class="c h" style="left:310.5px;width:88.0px;text-align:center;top:681px;height:18px;line-height:20px;">인터넷</div>
<div class="c h" style="left:398.5px;width:88.0px;text-align:center;top:681px;height:18px;line-height:20px;">평균</div>
<div class="c h" style="left:486.5px;width:88.0px;text-align:center;top:681px;height:18px;line-height:20px;">합격여부1</div>
<div class="c h" style="left:574.5px;width:88.0px;text-align:center;top:681px;height:18px;line-height:20px;">합격여부2</div>
<div class="c h" style="left:662.5px;width:78.0px;text-align:center;top:681px;height:18px;line-height:20px;">평가</div>
<div class="c  n" style="left:39px;width:95.5px;text-align:center;top:699px;height:18px;line-height:20px;transform:scaleX(.925);">SM20001</div>
<div class="c " style="left:134.5px;width:88.0px;text-align:center;top:699px;height:18px;line-height:20px;">이재근</div>
<div class="c  n" style="left:222.5px;width:88.0px;text-align:center;top:699px;height:18px;line-height:20px;">95</div>
<div class="c  n" style="left:310.5px;width:88.0px;text-align:center;top:699px;height:18px;line-height:20px;">88</div>
<div class="c  n" style="left:39px;width:95.5px;text-align:center;top:717px;height:18px;line-height:20px;transform:scaleX(.925);">SM20002</div>
<div class="c " style="left:134.5px;width:88.0px;text-align:center;top:717px;height:18px;line-height:20px;">김민선</div>
<div class="c  n" style="left:222.5px;width:88.0px;text-align:center;top:717px;height:18px;line-height:20px;">62</div>
<div class="c  n" style="left:310.5px;width:88.0px;text-align:center;top:717px;height:18px;line-height:20px;">75</div>
<div class="c  n" style="left:39px;width:95.5px;text-align:center;top:735px;height:18px;line-height:20px;transform:scaleX(.925);">SM20003</div>
<div class="c " style="left:134.5px;width:88.0px;text-align:center;top:735px;height:18px;line-height:20px;">이종원</div>
<div class="c  n" style="left:222.5px;width:88.0px;text-align:center;top:735px;height:18px;line-height:20px;">86</div>
<div class="c  n" style="left:310.5px;width:88.0px;text-align:center;top:735px;height:18px;line-height:20px;">100</div>
<div class="c  n" style="left:39px;width:95.5px;text-align:center;top:753px;height:18px;line-height:20px;transform:scaleX(.925);">SM20004</div>
<div class="c " style="left:134.5px;width:88.0px;text-align:center;top:753px;height:18px;line-height:20px;">한고은</div>
<div class="c  n" style="left:222.5px;width:88.0px;text-align:center;top:753px;height:18px;line-height:20px;">60</div>
<div class="c  n" style="left:310.5px;width:88.0px;text-align:center;top:753px;height:18px;line-height:20px;">80</div>
<div class="c  n" style="left:39px;width:95.5px;text-align:center;top:771px;height:18px;line-height:20px;transform:scaleX(.925);">SM20007</div>
<div class="c " style="left:134.5px;width:88.0px;text-align:center;top:771px;height:18px;line-height:20px;">장나라</div>
<div class="c  n" style="left:222.5px;width:88.0px;text-align:center;top:771px;height:18px;line-height:20px;">100</div>
<div class="c  n" style="left:310.5px;width:88.0px;text-align:center;top:771px;height:18px;line-height:20px;">70</div>
<div class="c  n" style="left:39px;width:95.5px;text-align:center;top:789px;height:18px;line-height:20px;transform:scaleX(.925);">SM20008</div>
<div class="c " style="left:134.5px;width:88.0px;text-align:center;top:789px;height:18px;line-height:20px;">김민종</div>
<div class="c  n" style="left:222.5px;width:88.0px;text-align:center;top:789px;height:18px;line-height:20px;">77</div>
<div class="c  n" style="left:310.5px;width:88.0px;text-align:center;top:789px;height:18px;line-height:20px;">80</div>
<div class="c  n" style="left:39px;width:95.5px;text-align:center;top:807px;height:18px;line-height:20px;transform:scaleX(.925);">SM20009</div>
<div class="c " style="left:134.5px;width:88.0px;text-align:center;top:807px;height:18px;line-height:20px;">이준희</div>
<div class="c  n" style="left:222.5px;width:88.0px;text-align:center;top:807px;height:18px;line-height:20px;">80</div>
<div class="c  n" style="left:310.5px;width:88.0px;text-align:center;top:807px;height:18px;line-height:20px;">60</div>
<div class="a" style="left:134.0px;top:681px;width:1px;height:144px;background:#000"></div>
<div class="a" style="left:222.0px;top:681px;width:1px;height:144px;background:#000"></div>
<div class="a" style="left:310.0px;top:681px;width:1px;height:144px;background:#000"></div>
<div class="a" style="left:398.0px;top:681px;width:1px;height:144px;background:#000"></div>
<div class="a" style="left:486.0px;top:681px;width:1px;height:144px;background:#000"></div>
<div class="a" style="left:574.0px;top:681px;width:1px;height:144px;background:#000"></div>
<div class="a" style="left:662.0px;top:681px;width:1px;height:144px;background:#000"></div>
<div class="a" style="left:39px;top:698.5px;width:701.5px;height:1px;background:#000"></div>
<div class="a" style="left:39px;top:716.5px;width:701.5px;height:1px;background:#000"></div>
<div class="a" style="left:39px;top:734.5px;width:701.5px;height:1px;background:#000"></div>
<div class="a" style="left:39px;top:752.5px;width:701.5px;height:1px;background:#000"></div>
<div class="a" style="left:39px;top:770.5px;width:701.5px;height:1px;background:#000"></div>
<div class="a" style="left:39px;top:788.5px;width:701.5px;height:1px;background:#000"></div>
<div class="a" style="left:39px;top:806.5px;width:701.5px;height:1px;background:#000"></div>
<div class="a" style="left:38px;top:680.0px;width:703.5px;height:2px;background:#000"></div>
<div class="a" style="left:38px;top:824.0px;width:703.5px;height:2px;background:#000"></div>
<div class="a" style="left:38.0px;top:681px;width:2px;height:144px;background:#000"></div>
<div class="a" style="left:739.5px;top:681px;width:2px;height:144px;background:#000"></div>
<div class="a" style="left:39px;top:879px;width:535.5px;height:18px;background:#ffc7ce"></div>
<div class="c h" style="left:39px;width:95.5px;text-align:center;top:879px;height:18px;line-height:20px;">제품코드</div>
<div class="c h" style="left:134.5px;width:88.0px;text-align:center;top:879px;height:18px;line-height:20px;">분류</div>
<div class="c h" style="left:222.5px;width:88.0px;text-align:center;top:879px;height:18px;line-height:20px;">단가</div>
<div class="c h" style="left:310.5px;width:88.0px;text-align:center;top:879px;height:18px;line-height:20px;">판매량</div>
<div class="c h" style="left:398.5px;width:88.0px;text-align:center;top:879px;height:18px;line-height:20px;">판매금액</div>
<div class="c h" style="left:486.5px;width:88.0px;text-align:center;top:879px;height:18px;line-height:20px;">담당자</div>
<div class="c m" style="left:39px;width:95.5px;text-align:center;top:897px;height:18px;line-height:20px;">238VM357</div>
<div class="c m" style="left:134.5px;width:88.0px;text-align:center;top:897px;height:18px;line-height:20px;">아동의류</div>
<div class="c m" style="left:222.5px;width:80.5px;text-align:right;top:897px;height:18px;line-height:20px;">75,300</div>
<div class="c m" style="left:310.5px;width:88.0px;text-align:center;top:897px;height:18px;line-height:20px;">5</div>
<div class="c m" style="left:398.5px;width:80.5px;text-align:right;top:897px;height:18px;line-height:20px;">376,500</div>
<div class="c m" style="left:486.5px;width:88.0px;text-align:center;top:897px;height:18px;line-height:20px;">이하원</div>
<div class="c m" style="left:39px;width:95.5px;text-align:center;top:915px;height:18px;line-height:20px;">537RI257</div>
<div class="c m" style="left:134.5px;width:88.0px;text-align:center;top:915px;height:18px;line-height:20px;">여성의류</div>
<div class="c m" style="left:222.5px;width:80.5px;text-align:right;top:915px;height:18px;line-height:20px;">72,400</div>
<div class="c m" style="left:310.5px;width:88.0px;text-align:center;top:915px;height:18px;line-height:20px;">13</div>
<div class="c m" style="left:398.5px;width:80.5px;text-align:right;top:915px;height:18px;line-height:20px;">941,200</div>
<div class="c m" style="left:486.5px;width:88.0px;text-align:center;top:915px;height:18px;line-height:20px;">조승재</div>
<div class="c m" style="left:39px;width:95.5px;text-align:center;top:933px;height:18px;line-height:20px;">575HE011</div>
<div class="c m" style="left:134.5px;width:88.0px;text-align:center;top:933px;height:18px;line-height:20px;">여성의류</div>
<div class="c m" style="left:222.5px;width:80.5px;text-align:right;top:933px;height:18px;line-height:20px;">31,500</div>
<div class="c m" style="left:310.5px;width:88.0px;text-align:center;top:933px;height:18px;line-height:20px;">12</div>
<div class="c m" style="left:398.5px;width:80.5px;text-align:right;top:933px;height:18px;line-height:20px;">378,000</div>
<div class="c m" style="left:486.5px;width:88.0px;text-align:center;top:933px;height:18px;line-height:20px;">이하원</div>
<div class="a" style="left:134.0px;top:879px;width:1px;height:78px;background:#000"></div>
<div class="a" style="left:222.0px;top:879px;width:1px;height:78px;background:#000"></div>
<div class="a" style="left:310.0px;top:879px;width:1px;height:78px;background:#000"></div>
<div class="a" style="left:398.0px;top:879px;width:1px;height:78px;background:#000"></div>
<div class="a" style="left:486.0px;top:879px;width:1px;height:78px;background:#000"></div>
<div class="a" style="left:39px;top:896.5px;width:535.5px;height:1px;background:#000"></div>
<div class="a" style="left:39px;top:914.5px;width:535.5px;height:1px;background:#000"></div>
<div class="a" style="left:39px;top:932.5px;width:535.5px;height:1px;background:#000"></div>
<div class="a" style="left:38px;top:878.0px;width:536.5px;height:2px;background:#000"></div>
<div class="a" style="left:38.0px;top:879px;width:2px;height:78px;background:#000"></div>
<div class="a" style="left:573.0px;top:879px;width:2px;height:78px;background:#000"></div>
<div class="c " style="left:662.5px;width:283.5px;text-align:center;top:879px;height:18px;line-height:20px;font-weight:700;-webkit-text-stroke:0;font-size:12.5px;letter-spacing:1.3px;margin-top:-1px">[ 분류/담당자 기준 판매건수 ]</div>
<div class="a" style="left:662.5px;top:897px;width:283.5px;height:18px;background:#ffc7ce"></div>
<div class="a" style="left:740.5px;top:915px;width:205.5px;height:42px;background:#ededed"></div>
<div class="c h" style="left:662.5px;width:78.0px;text-align:center;top:897px;height:18px;line-height:20px;">분류</div>
<div class="c h" style="left:740.5px;width:73.5px;text-align:center;top:897px;height:18px;line-height:20px;">조승재</div>
<div class="c h" style="left:814px;width:67px;text-align:center;top:897px;height:18px;line-height:20px;">이하원</div>
<div class="c h" style="left:881px;width:65px;text-align:center;top:897px;height:18px;line-height:20px;">박재민</div>
<div class="c m" style="left:662.5px;width:78.0px;text-align:center;top:915px;height:18px;line-height:20px;">여성의류</div>
<div class="c m" style="left:662.5px;width:78.0px;text-align:center;top:933px;height:18px;line-height:20px;">남성의류</div>
<div class="a" style="left:740.0px;top:897px;width:1px;height:60px;background:#000"></div>
<div class="a" style="left:813.5px;top:897px;width:1px;height:60px;background:#000"></div>
<div class="a" style="left:880.5px;top:897px;width:1px;height:60px;background:#000"></div>
<div class="a" style="left:662.5px;top:914.5px;width:283.5px;height:1px;background:#000"></div>
<div class="a" style="left:662.5px;top:932.5px;width:283.5px;height:1px;background:#000"></div>
<div class="a" style="left:661.5px;top:896.0px;width:285.5px;height:2px;background:#000"></div>
<div class="a" style="left:661.5px;top:897px;width:2px;height:60px;background:#000"></div>
<div class="a" style="left:945.0px;top:897px;width:2px;height:60px;background:#000"></div>
<div class="a" style="left:0;top:334px;width:1507px;height:17px;background:#efefef"></div>
<div class="a" style="left:0;top:351px;width:1507px;height:1px;background:#b9b9b9"></div>
<div class="a" style="left:0;top:352px;width:28px;height:605px;background:#efefef"></div>
<div class="a" style="left:28px;top:352px;width:1px;height:605px;background:#c8c8c8"></div>
<div class="a" style="left:1418px;top:334px;width:63px;height:16px;background:#e0e0e0"></div>
<div class="a" style="left:1418px;top:350px;width:63px;height:2px;background:#107c41"></div>
<div class="a" style="left:0px;top:591px;width:27px;height:18px;background:#e0e0e0"></div>
<div class="a" style="left:27px;top:591px;width:2px;height:18px;background:#107c41"></div>
<div class="hd" style="left:28.5px;width:10.5px;top:333px;height:18px;line-height:18px;color:#4a4a4a">A</div>
<div class="a" style="left:39px;top:336px;width:1px;height:15px;background:#dcdcdc"></div>
<div class="hd" style="left:39px;width:95.5px;top:333px;height:18px;line-height:18px;color:#4a4a4a">B</div>
<div class="a" style="left:134px;top:336px;width:1px;height:15px;background:#dcdcdc"></div>
<div class="hd" style="left:134.5px;width:88.0px;top:333px;height:18px;line-height:18px;color:#4a4a4a">C</div>
<div class="a" style="left:222px;top:336px;width:1px;height:15px;background:#dcdcdc"></div>
<div class="hd" style="left:222.5px;width:88.0px;top:333px;height:18px;line-height:18px;color:#4a4a4a">D</div>
<div class="a" style="left:310px;top:336px;width:1px;height:15px;background:#dcdcdc"></div>
<div class="hd" style="left:310.5px;width:88.0px;top:333px;height:18px;line-height:18px;color:#4a4a4a">E</div>
<div class="a" style="left:398px;top:336px;width:1px;height:15px;background:#dcdcdc"></div>
<div class="hd" style="left:398.5px;width:88.0px;top:333px;height:18px;line-height:18px;color:#4a4a4a">F</div>
<div class="a" style="left:486px;top:336px;width:1px;height:15px;background:#dcdcdc"></div>
<div class="hd" style="left:486.5px;width:88.0px;top:333px;height:18px;line-height:18px;color:#4a4a4a">G</div>
<div class="a" style="left:574px;top:336px;width:1px;height:15px;background:#dcdcdc"></div>
<div class="hd" style="left:574.5px;width:88.0px;top:333px;height:18px;line-height:18px;color:#4a4a4a">H</div>
<div class="a" style="left:662px;top:336px;width:1px;height:15px;background:#dcdcdc"></div>
<div class="hd" style="left:662.5px;width:78.0px;top:333px;height:18px;line-height:18px;color:#4a4a4a">I</div>
<div class="a" style="left:740px;top:336px;width:1px;height:15px;background:#dcdcdc"></div>
<div class="hd" style="left:740.5px;width:73.5px;top:333px;height:18px;line-height:18px;color:#4a4a4a">J</div>
<div class="a" style="left:814px;top:336px;width:1px;height:15px;background:#dcdcdc"></div>
<div class="hd" style="left:814px;width:67px;top:333px;height:18px;line-height:18px;color:#4a4a4a">K</div>
<div class="a" style="left:881px;top:336px;width:1px;height:15px;background:#dcdcdc"></div>
<div class="hd" style="left:881px;width:65px;top:333px;height:18px;line-height:18px;color:#4a4a4a">L</div>
<div class="a" style="left:946px;top:336px;width:1px;height:15px;background:#dcdcdc"></div>
<div class="hd" style="left:946px;width:17px;top:333px;height:18px;line-height:18px;color:#4a4a4a">M</div>
<div class="a" style="left:963px;top:336px;width:1px;height:15px;background:#dcdcdc"></div>
<div class="hd" style="left:963px;width:43px;top:333px;height:18px;line-height:18px;color:#4a4a4a">N</div>
<div class="a" style="left:1006px;top:336px;width:1px;height:15px;background:#dcdcdc"></div>
<div class="hd" style="left:1006px;width:50px;top:333px;height:18px;line-height:18px;color:#4a4a4a">O</div>
<div class="a" style="left:1056px;top:336px;width:1px;height:15px;background:#dcdcdc"></div>
<div class="hd" style="left:1056px;width:110px;top:333px;height:18px;line-height:18px;color:#4a4a4a">P</div>
<div class="a" style="left:1166px;top:336px;width:1px;height:15px;background:#dcdcdc"></div>
<div class="hd" style="left:1166px;width:63px;top:333px;height:18px;line-height:18px;color:#4a4a4a">Q</div>
<div class="a" style="left:1229px;top:336px;width:1px;height:15px;background:#dcdcdc"></div>
<div class="hd" style="left:1229px;width:63px;top:333px;height:18px;line-height:18px;color:#4a4a4a">R</div>
<div class="a" style="left:1292px;top:336px;width:1px;height:15px;background:#dcdcdc"></div>
<div class="hd" style="left:1292px;width:63px;top:333px;height:18px;line-height:18px;color:#4a4a4a">S</div>
<div class="a" style="left:1355px;top:336px;width:1px;height:15px;background:#dcdcdc"></div>
<div class="hd" style="left:1355px;width:63px;top:333px;height:18px;line-height:18px;color:#4a4a4a">T</div>
<div class="a" style="left:1418px;top:336px;width:1px;height:15px;background:#dcdcdc"></div>
<div class="hd" style="left:1418px;width:63px;top:333px;height:18px;line-height:18px;color:#185c37">U</div>
<div class="a" style="left:1481px;top:336px;width:1px;height:15px;background:#dcdcdc"></div>
<div class="a" style="left:28px;top:336px;width:1px;height:15px;background:#dcdcdc"></div>
<svg class="a" style="left:14px;top:338px" width="12" height="12" viewBox="0 0 12 12"><path d="M11 1V11H1Z" fill="#d9d9d9"/></svg>
<div class="a" style="left:0;top:352px;width:28px;height:600px;overflow:hidden">
<div class="hd" style="left:0;width:28px;top:-9.5px;height:18px;line-height:19px;color:#4a4a4a">1</div>
<div class="hd" style="left:0;width:28px;top:10px;height:21px;line-height:22px;color:#4a4a4a">2</div>
<div class="hd" style="left:0;width:28px;top:41px;height:18.5px;line-height:17.5px;color:#4a4a4a">4</div>
<div class="hd" style="left:0;width:28px;top:59.5px;height:17.5px;line-height:16.5px;color:#4a4a4a">5</div>
<div class="hd" style="left:0;width:28px;top:77px;height:18px;line-height:17px;color:#4a4a4a">6</div>
<div class="hd" style="left:0;width:28px;top:95px;height:18px;line-height:17px;color:#4a4a4a">7</div>
<div class="hd" style="left:0;width:28px;top:113px;height:18px;line-height:17px;color:#4a4a4a">8</div>
<div class="hd" style="left:0;width:28px;top:131px;height:18px;line-height:17px;color:#4a4a4a">9</div>
<div class="hd" style="left:0;width:28px;top:149px;height:18px;line-height:17px;color:#4a4a4a">10</div>
<div class="hd" style="left:0;width:28px;top:167px;height:18px;line-height:17px;color:#4a4a4a">11</div>
<div class="hd" style="left:0;width:28px;top:185px;height:18px;line-height:17px;color:#4a4a4a">12</div>
<div class="hd" style="left:0;width:28px;top:203px;height:18px;line-height:17px;color:#4a4a4a">13</div>
<div class="hd" style="left:0;width:28px;top:221px;height:18px;line-height:17px;color:#4a4a4a">14</div>
<div class="hd" style="left:0;width:28px;top:239px;height:18px;line-height:17px;color:#185c37">15</div>
<div class="hd" style="left:0;width:28px;top:257px;height:18px;line-height:17px;color:#4a4a4a">16</div>
<div class="hd" style="left:0;width:28px;top:275px;height:18px;line-height:17px;color:#4a4a4a">17</div>
<div class="hd" style="left:0;width:28px;top:293px;height:18px;line-height:17px;color:#4a4a4a">18</div>
<div class="hd" style="left:0;width:28px;top:311px;height:18px;line-height:17px;color:#4a4a4a">19</div>
<div class="hd" style="left:0;width:28px;top:329px;height:18px;line-height:17px;color:#4a4a4a">20</div>
<div class="hd" style="left:0;width:28px;top:347px;height:18px;line-height:17px;color:#4a4a4a">21</div>
<div class="hd" style="left:0;width:28px;top:365px;height:18px;line-height:17px;color:#4a4a4a">22</div>
<div class="hd" style="left:0;width:28px;top:383px;height:18px;line-height:17px;color:#4a4a4a">23</div>
<div class="hd" style="left:0;width:28px;top:401px;height:18px;line-height:17px;color:#4a4a4a">24</div>
<div class="hd" style="left:0;width:28px;top:419px;height:18px;line-height:17px;color:#4a4a4a">25</div>
<div class="hd" style="left:0;width:28px;top:437px;height:18px;line-height:17px;color:#4a4a4a">26</div>
<div class="hd" style="left:0;width:28px;top:455px;height:18px;line-height:17px;color:#4a4a4a">27</div>
<div class="hd" style="left:0;width:28px;top:473px;height:18px;line-height:17px;color:#4a4a4a">28</div>
<div class="hd" style="left:0;width:28px;top:491px;height:18px;line-height:17px;color:#4a4a4a">29</div>
<div class="hd" style="left:0;width:28px;top:509px;height:18px;line-height:17px;color:#4a4a4a">30</div>
<div class="hd" style="left:0;width:28px;top:527px;height:18px;line-height:17px;color:#4a4a4a">31</div>
<div class="hd" style="left:0;width:28px;top:545px;height:18px;line-height:17px;color:#4a4a4a">32</div>
<div class="hd" style="left:0;width:28px;top:563px;height:18px;line-height:17px;color:#4a4a4a">33</div>
<div class="hd" style="left:0;width:28px;top:581px;height:18px;line-height:17px;color:#4a4a4a">34</div>
</div>
<div class="a" style="left:0;top:383px;width:28px;height:10px;overflow:hidden"><div class="hd" style="left:0;width:28px;top:-9.400px;height:18px;line-height:19px;color:#4a4a4a">3</div></div>
<div class="a" style="left:0;top:361px;width:28px;height:1px;background:#d8d8d8"></div>
<div class="a" style="left:0;top:382px;width:28px;height:1px;background:#d8d8d8"></div>
<div class="a" style="left:0;top:392px;width:28px;height:1px;background:#d8d8d8"></div>
<div class="a" style="left:0;top:411px;width:28px;height:1px;background:#d8d8d8"></div>
<div class="a" style="left:0;top:428px;width:28px;height:1px;background:#d8d8d8"></div>
<div class="a" style="left:0;top:446px;width:28px;height:1px;background:#d8d8d8"></div>
<div class="a" style="left:0;top:464px;width:28px;height:1px;background:#d8d8d8"></div>
<div class="a" style="left:0;top:482px;width:28px;height:1px;background:#d8d8d8"></div>
<div class="a" style="left:0;top:500px;width:28px;height:1px;background:#d8d8d8"></div>
<div class="a" style="left:0;top:518px;width:28px;height:1px;background:#d8d8d8"></div>
<div class="a" style="left:0;top:536px;width:28px;height:1px;background:#d8d8d8"></div>
<div class="a" style="left:0;top:554px;width:28px;height:1px;background:#d8d8d8"></div>
<div class="a" style="left:0;top:572px;width:28px;height:1px;background:#d8d8d8"></div>
<div class="a" style="left:0;top:590px;width:28px;height:1px;background:#d8d8d8"></div>
<div class="a" style="left:0;top:608px;width:28px;height:1px;background:#d8d8d8"></div>
<div class="a" style="left:0;top:626px;width:28px;height:1px;background:#d8d8d8"></div>
<div class="a" style="left:0;top:644px;width:28px;height:1px;background:#d8d8d8"></div>
<div class="a" style="left:0;top:662px;width:28px;height:1px;background:#d8d8d8"></div>
<div class="a" style="left:0;top:680px;width:28px;height:1px;background:#d8d8d8"></div>
<div class="a" style="left:0;top:698px;width:28px;height:1px;background:#d8d8d8"></div>
<div class="a" style="left:0;top:716px;width:28px;height:1px;background:#d8d8d8"></div>
<div class="a" style="left:0;top:734px;width:28px;height:1px;background:#d8d8d8"></div>
<div class="a" style="left:0;top:752px;width:28px;height:1px;background:#d8d8d8"></div>
<div class="a" style="left:0;top:770px;width:28px;height:1px;background:#d8d8d8"></div>
<div class="a" style="left:0;top:788px;width:28px;height:1px;background:#d8d8d8"></div>
<div class="a" style="left:0;top:806px;width:28px;height:1px;background:#d8d8d8"></div>
<div class="a" style="left:0;top:824px;width:28px;height:1px;background:#d8d8d8"></div>
<div class="a" style="left:0;top:842px;width:28px;height:1px;background:#d8d8d8"></div>
<div class="a" style="left:0;top:860px;width:28px;height:1px;background:#d8d8d8"></div>
<div class="a" style="left:0;top:878px;width:28px;height:1px;background:#d8d8d8"></div>
<div class="a" style="left:0;top:896px;width:28px;height:1px;background:#d8d8d8"></div>
<div class="a" style="left:0;top:914px;width:28px;height:1px;background:#d8d8d8"></div>
<div class="a" style="left:0;top:932px;width:28px;height:1px;background:#d8d8d8"></div>
<div class="a" style="left:0;top:950px;width:28px;height:1px;background:#d8d8d8"></div>
<div class="a" style="left:0;top:952.500px;width:1507px;height:5px;background:#fff"></div>
<div class="a" style="left:0;top:952.500px;width:435px;height:6px;background:#e6eaec;border-radius:0 6px 0 0"></div>
<div class="a" style="left:551px;top:952.500px;width:960px;height:6px;background:#e6eaec;border-radius:6px 0 0 0"></div>
</body></html>
